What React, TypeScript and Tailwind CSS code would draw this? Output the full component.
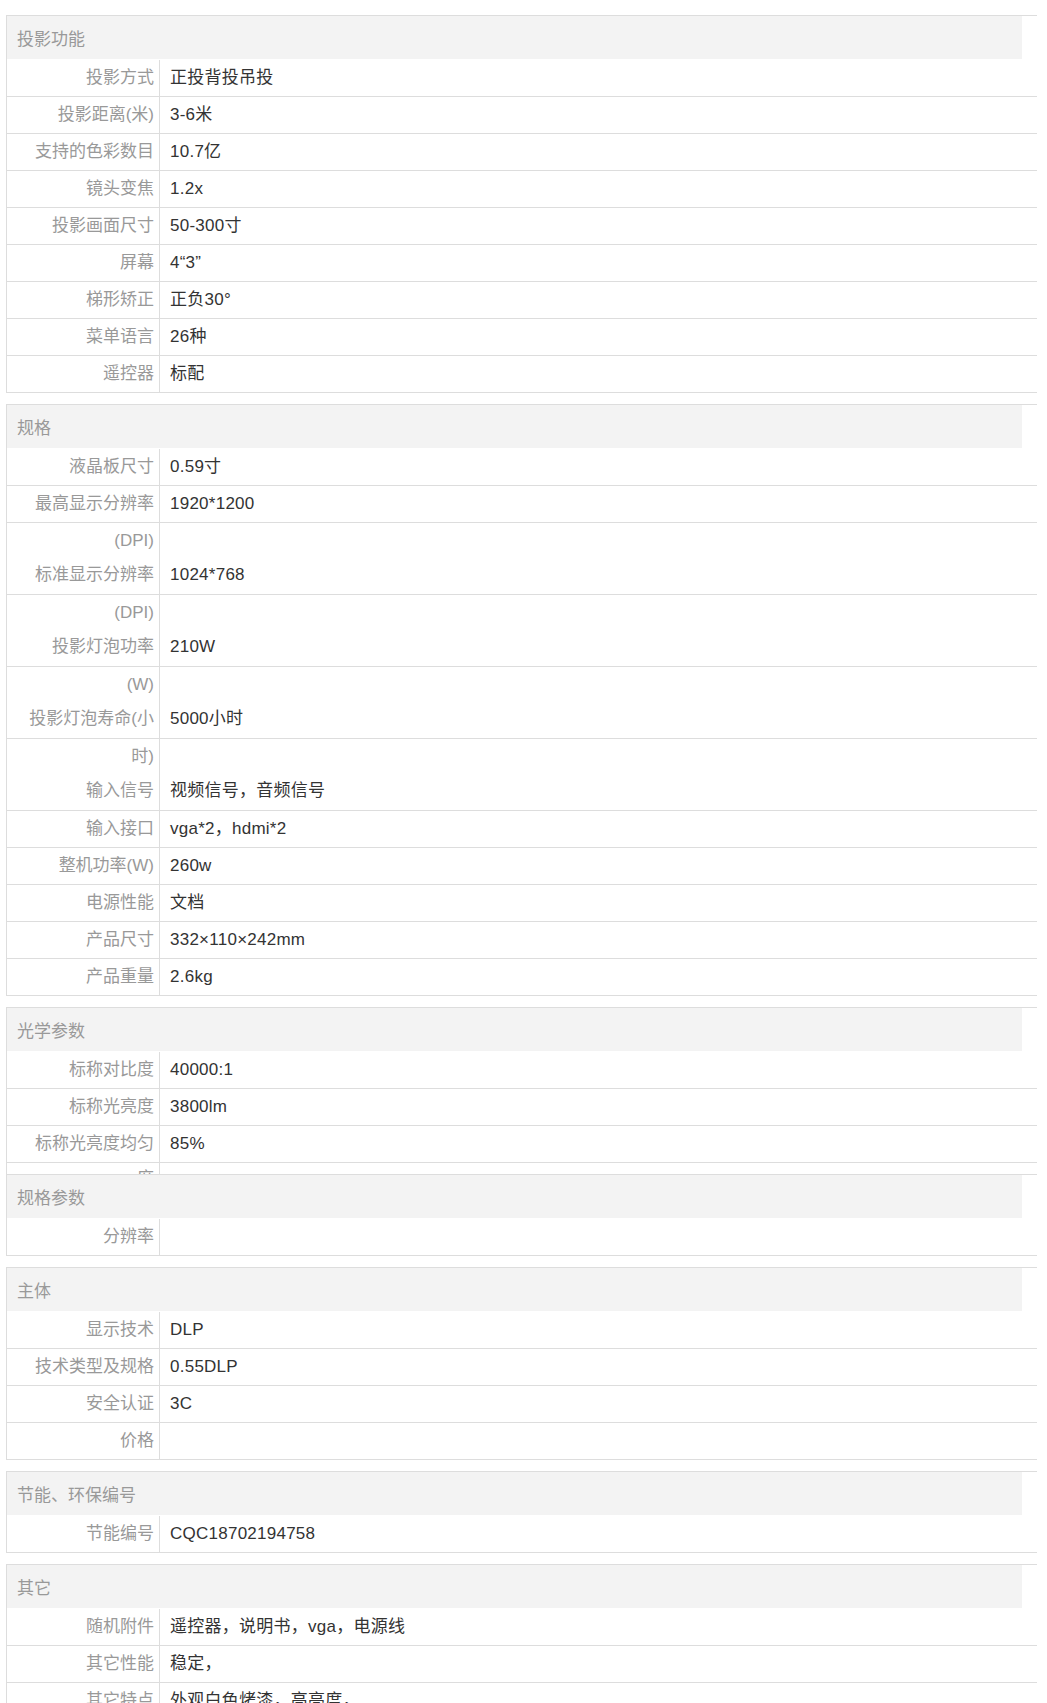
type Row = {
  label: string;
  value?: string;
  // overflow line of the previous label, shown on top of a double row
  pre?: string;
};

type Section = {
  title: string;
  rows: Row[];
  spill?: string;
};

const sections: Section[] = [
  {
    title: "投影功能",
    rows: [
      { label: "投影方式", value: "正投背投吊投" },
      { label: "投影距离(米)", value: "3-6米" },
      { label: "支持的色彩数目", value: "10.7亿" },
      { label: "镜头变焦", value: "1.2x" },
      { label: "投影画面尺寸", value: "50-300寸" },
      { label: "屏幕", value: "4“3”" },
      { label: "梯形矫正", value: "正负30°" },
      { label: "菜单语言", value: "26种" },
      { label: "遥控器", value: "标配" },
    ],
  },
  {
    title: "规格",
    rows: [
      { label: "液晶板尺寸", value: "0.59寸" },
      { label: "最高显示分辨率", value: "1920*1200" },
      { pre: "(DPI)", label: "标准显示分辨率", value: "1024*768" },
      { pre: "(DPI)", label: "投影灯泡功率", value: "210W" },
      { pre: "(W)", label: "投影灯泡寿命(小", value: "5000小时" },
      { pre: "时)", label: "输入信号", value: "视频信号，音频信号" },
      { label: "输入接口", value: "vga*2，hdmi*2" },
      { label: "整机功率(W)", value: "260w" },
      { label: "电源性能", value: "文档" },
      { label: "产品尺寸", value: "332×110×242mm" },
      { label: "产品重量", value: "2.6kg" },
    ],
  },
  {
    title: "光学参数",
    rows: [
      { label: "标称对比度", value: "40000:1" },
      { label: "标称光亮度", value: "3800lm" },
      { label: "标称光亮度均匀", value: "85%" },
    ],
    spill: "度",
  },
  {
    title: "规格参数",
    rows: [{ label: "分辨率" }],
  },
  {
    title: "主体",
    rows: [
      { label: "显示技术", value: "DLP" },
      { label: "技术类型及规格", value: "0.55DLP" },
      { label: "安全认证", value: "3C" },
      { label: "价格" },
    ],
  },
  {
    title: "节能、环保编号",
    rows: [{ label: "节能编号", value: "CQC18702194758" }],
  },
  {
    title: "其它",
    rows: [
      { label: "随机附件", value: "遥控器，说明书，vga，电源线" },
      { label: "其它性能", value: "稳定，" },
      { label: "其它特点", value: "外观白色烤漆，高亮度，" },
    ],
  },
];

function ParamRow({ row }: { row: Row }) {
  if (row.pre) {
    return (
      <div className="flex h-[72px] border-b border-[#ddd]">
        <div className="w-[153px] shrink-0 border-r border-[#ddd] pt-px pr-[5px] text-right leading-[34px] whitespace-nowrap text-[#999]">
          <div>{row.pre}</div>
          <div>{row.label}</div>
        </div>
        <div className="pt-[35px] pl-[10px] leading-[34px] tracking-[0.25px] whitespace-nowrap text-[#333]">
          {row.value}
        </div>
      </div>
    );
  }

  return (
    <div className="flex h-[37px] border-b border-[#ddd]">
      <div className="w-[153px] shrink-0 border-r border-[#ddd] pr-[5px] text-right leading-[36px] whitespace-nowrap text-[#999]">
        {row.label}
      </div>
      <div className="pl-[10px] leading-[36px] tracking-[0.25px] whitespace-nowrap text-[#333]">
        {row.value}
      </div>
    </div>
  );
}

function ParamSection({ section }: { section: Section }) {
  return (
    <div
      className={`w-[1031px] border-t border-l border-[#ddd] ${
        section.spill ? "" : "mb-[11px]"
      }`}
    >
      <div className="h-[43px] w-[1015px] bg-[#f3f3f3] pt-[2px] pl-[10px] leading-[43px] text-[#999]">
        {section.title}
      </div>
      <div className="h-px" />
      {section.rows.map((row) => (
        <ParamRow key={row.label} row={row} />
      ))}

      {/* label that runs out of its row, cut off by the next block */}
      {section.spill && (
        <div className="flex h-[11px] overflow-hidden">
          <div className="w-[153px] shrink-0 border-r border-[#ddd] pr-[5px] text-right leading-[32px] text-[#999]">
            {section.spill}
          </div>
        </div>
      )}
    </div>
  );
}

export default function App() {
  return (
    <div className="h-[1703px] overflow-hidden bg-white">
      <div
        className="pt-[15px] pl-[6px] text-[17px]"
        style={{ fontFamily: '"Liberation Sans", "Noto Sans CJK SC", sans-serif' }}
      >
        {sections.map((section) => (
          <ParamSection key={section.title} section={section} />
        ))}
      </div>
    </div>
  );
}
